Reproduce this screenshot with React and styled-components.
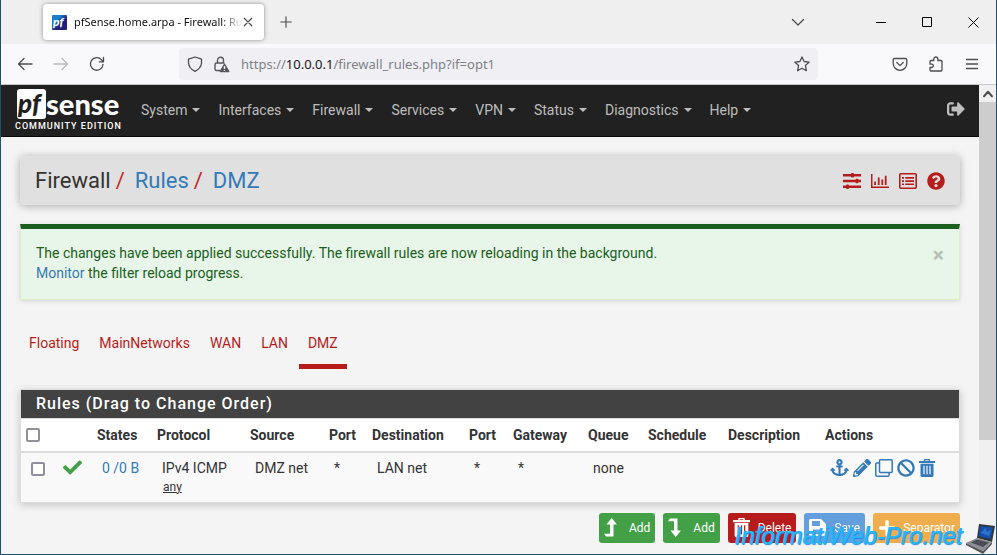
import { createGlobalStyle, styled } from "styled-components";
import {
  FaAnchor,
  FaBan,
  FaCheck,
  FaPencilAlt,
  FaPlus,
  FaQuestionCircle,
  FaSignOutAlt,
} from "react-icons/fa";

const menus = [
  "System",
  "Interfaces",
  "Firewall",
  "Services",
  "VPN",
  "Status",
  "Diagnostics",
  "Help",
];

const tabs = ["Floating", "MainNetworks", "WAN", "LAN", "DMZ"];

const columns = [
  { name: "States", width: 60 },
  { name: "Protocol", width: 93 },
  { name: "Source", width: 79 },
  { name: "Port", width: 43 },
  { name: "Destination", width: 97 },
  { name: "Port", width: 44 },
  { name: "Gateway", width: 75 },
  { name: "Queue", width: 60 },
  { name: "Schedule", width: 80 },
  { name: "Description", width: 97 },
  { name: "Actions", width: 139 },
];

const GlobalStyle = createGlobalStyle`
  * {
    box-sizing: border-box;
  }
  body {
    margin: 0;
    font-family: Roboto, "Liberation Sans", sans-serif;
    font-size: 14px;
    line-height: 20px;
    color: #333;
  }
  a {
    color: #337ab7;
    text-decoration: none;
  }
  button {
    font: inherit;
    border: 0;
    padding: 0;
    background: none;
    color: inherit;
  }
  svg {
    display: block;
    flex: none;
  }
`;

const Window = styled.div`
  position: relative;
  display: flex;
  flex-direction: column;
  height: 100vh;
  overflow: hidden;
  border: 1px solid #1b5070;
  border-top: 0;
  background: #f4f4f4;
`;

/* browser chrome */

const TitleBar = styled.div`
  display: flex;
  flex: none;
  align-items: center;
  height: 44px;
  padding-left: 42px;
  background: #efefef;
  color: #222;
`;

const BrowserTab = styled.div`
  display: flex;
  align-items: center;
  width: 221px;
  height: 36px;
  padding: 0 10px 0 9px;
  border-radius: 4px;
  background: #fff;
  box-shadow: 0 0 4px rgba(0, 0, 0, 0.4);
`;

const TabTitle = styled.span`
  flex: 1;
  margin-left: 7px;
  overflow: hidden;
  white-space: nowrap;
  font: 11px/20px "Noto Sans", sans-serif;
  color: #111;
  mask-image: linear-gradient(to right, #000 88%, transparent);
`;

const ChromeButton = styled.button`
  display: flex;
  align-items: center;
  justify-content: center;
  flex: none;
  width: ${(props) => props.$width || 36}px;
  height: 32px;
  color: ${(props) => props.$color || "#4c4c52"};
`;

const Spacer = styled.div`
  flex: 1;
`;

const ToolBar = styled.div`
  display: flex;
  flex: none;
  align-items: center;
  height: 41px;
  padding: 0 6px;
  border-bottom: 1px solid #c8c8cc;
  background: #f9f9fb;
`;

const AddressBar = styled.div`
  display: flex;
  flex: 1;
  align-items: center;
  height: 32px;
  margin: 0 64px;
  padding-left: 2px;
  border-radius: 4px;
  background: #f0f0f4;
`;

const Url = styled.span`
  flex: 1;
  margin-left: 6px;
  font: 13px/20px "Noto Sans", sans-serif;
  color: #808086;

  b {
    font-weight: 400;
    color: #15141a;
  }
`;

const Viewport = styled.div`
  display: flex;
  flex: 1;
  min-height: 0;
`;

const Page = styled.div`
  flex: 1;
  min-width: 0;
  overflow: hidden;
`;

const ScrollTrack = styled.div`
  display: flex;
  flex-direction: column;
  width: 17px;
  background: #f0f0f0;
`;

const ScrollThumb = styled.div`
  height: 72%;
  background: #cdcdcd;
`;

const ScrollArrow = styled.button`
  display: flex;
  align-items: center;
  justify-content: center;
  height: 17px;
  color: #505050;
`;

/* pfSense page */

const NavBar = styled.nav`
  display: flex;
  align-items: center;
  height: 52px;
  padding: 0 14px;
  border-bottom: 1px solid #080808;
  background: #212121;
`;

const Brand = styled.a`
  width: 106px;
  margin-right: 11px;
  color: #fff;
`;

const BrandName = styled.span`
  display: flex;
  height: 30px;
  margin-left: 2px;
  font: 900 29px/30px Lato, sans-serif;
`;

const BrandMark = styled.span`
  width: 29px;
  padding-left: 1px;
  border-radius: 3px;
  background: #fff;
  color: #212121;
  font-size: 26px;
  font-style: italic;
  line-height: 28px;
`;

const Edition = styled.span`
  display: block;
  white-space: nowrap;
  font-size: 9px;
  font-weight: 500;
  line-height: 14px;
  letter-spacing: 1px;
`;

const MenuList = styled.div`
  display: flex;
  flex: 1;
  padding-bottom: 2px;
`;

const MenuButton = styled.button`
  display: flex;
  align-items: center;
  padding: 0 9px;
  color: #bdbdbd;

  &::after {
    content: "";
    margin-left: 5px;
    border: 4px solid transparent;
    border-top-color: currentColor;
    border-bottom: 0;
  }
`;

const LogoutLink = styled.a`
  padding-bottom: 4px;
  color: #bdbdbd;
`;

const Container = styled.main`
  padding: 19px;
`;

const PageHeader = styled.header`
  display: flex;
  align-items: center;
  justify-content: space-between;
  height: 49px;
  padding: 0 15px;
  border-radius: 4px;
  background: #e0e0e0;
  box-shadow: 0 1px 8px rgba(0, 0, 0, 0.3);
`;

const Breadcrumb = styled.h1`
  display: flex;
  margin: 0;
  font-size: 22px;
  font-weight: 400;
  line-height: 28px;
  color: #333;
`;

const Slash = styled.span`
  margin: 0 10px 0 5px;
  color: #c62828;
`;

const HeaderLinks = styled.div`
  display: flex;
  gap: 10px;

  a {
    color: #b71c1c;
  }
`;

const Alert = styled.div`
  display: flex;
  justify-content: space-between;
  margin-top: 19px;
  padding: 14px 15px;
  min-height: 76px;
  border: 1px solid #dcedc8;
  border-top: 5px solid #1b5e20;
  background: #e8f5e9;
  box-shadow: 0 1px 5px rgba(0, 0, 0, 0.12);
  color: #1b5e20;
`;

const CloseButton = styled.button`
  align-self: flex-start;
  color: #b5c0b6;
  font-size: 21px;
  font-weight: 700;
  line-height: 24px;
`;

const TabList = styled.nav`
  display: flex;
  gap: 2px;
  margin-top: 23px;
`;

const TabLink = styled.a`
  padding: 10px 9px 11px;
  border-bottom: 5px solid ${(props) => (props.$active ? "#b71c1c" : "transparent")};
  color: #b71c1c;
`;

const Panel = styled.section`
  margin: 20px 0 10px;
  border: 1px solid #ddd;
  background: #fff;
  box-shadow: 0 2px 8px rgba(0, 0, 0, 0.2);
`;

const PanelTitle = styled.h2`
  margin: 0;
  padding: 0 15px;
  background: #424242;
  color: #fff;
  font-size: 16px;
  font-weight: 500;
  line-height: 28px;
  letter-spacing: 1px;
`;

const RulesTable = styled.table`
  width: 100%;
  border-collapse: collapse;
  border-top: 1px solid #ddd;

  th {
    height: 33px;
    padding: 0 5px;
    border-bottom: 2px solid #ddd;
    text-align: left;
    font-weight: 700;
  }
  td {
    height: 50px;
    padding: 5px 0 0 10px;
    background: #f9f9f9;
    vertical-align: top;
  }
  small {
    display: block;
    font-size: 12px;
    line-height: 18px;
    padding-left: 1px;
    text-decoration: underline;
  }
`;

const CheckBox = styled.input`
  appearance: none;
  display: block;
  width: 14px;
  height: 14px;
  margin: ${(props) => (props.$row ? "4px 0 0" : "0")};
  border: 2px solid #8f8f9d;
  border-radius: 2px;
  background: #fff;
`;

const RowActions = styled.div`
  display: flex;
  gap: 4px;

  a {
    display: flex;
    align-items: center;
    height: 20px;
  }
`;

const ButtonRow = styled.div`
  display: flex;
  justify-content: flex-end;
  gap: 8px;
`;

const ActionButton = styled.button`
  display: flex;
  align-items: center;
  height: 30px;
  padding: 0 5px;
  border-radius: 3px;
  background: ${(props) => props.$color};
  color: #fff;
  font-size: 12px;
  opacity: ${(props) => (props.$muted ? 0.85 : 1)};
`;

const ButtonIcon = styled.span`
  width: 25px;
`;

const Watermark = styled.div`
  position: absolute;
  right: 0;
  bottom: 0;
  display: flex;
  align-items: flex-end;
  gap: 4px;
  color: #29b6f6;
  font: italic 24px/36px "Liberation Sans", sans-serif;
  text-shadow: 1px 0 0 #29a9f5, 1px 1px 1px #1e88e5;
`;

const Line = ({ d, size = 16, width = 1.3, color = "currentColor" }) => (
  <svg width={size} height={size} viewBox="0 0 16 16" fill="none" stroke={color} strokeWidth={width} strokeLinecap="round" strokeLinejoin="round">
    <path d={d} />
  </svg>
);

const Favicon = () => (
  <svg width="15" height="15" viewBox="0 0 15 15">
    <defs>
      <linearGradient id="fav" x1="0" y1="0" x2="1" y2="1">
        <stop offset="0.3" stopColor="#1b7fd0" />
        <stop offset="0.6" stopColor="#20207c" />
      </linearGradient>
    </defs>
    <rect width="15" height="15" rx="1" fill="url(#fav)" />
    <text x="1" y="11" fill="#fff" fontFamily="Lato" fontWeight="900" fontStyle="italic" fontSize="12">pf</text>
  </svg>
);

const LockWarning = () => (
  <svg width="17" height="17" viewBox="0 0 17 17" fill="none" stroke="#55555b" strokeWidth="1.4">
    <path d="M4.500 7V4.300a3 3 0 0 1 6 0V7M7 14.500H3.500A1.500 1.500 0 0 1 2 13V8.500A1.500 1.500 0 0 1 3.500 7H11.500" />
    <path d="M11.500 8.300L15.800 15.500H7.200z" fill="#55555b" strokeLinejoin="round" />
    <path d="M11.500 10v3M11.500 14v1" stroke="#f0f0f4" />
  </svg>
);

const Sliders = () => (
  <svg width="18" height="18" viewBox="0 0 18 18" fill="currentColor">
    <path d="M0 2h18v2.500H0zM0 7.800h18v2.500H0zM0 13.500h18V16H0z" />
    <rect x="8" y="1" width="3" height="4.500" rx="1" />
    <rect x="12.500" y="6.800" width="3" height="4.500" rx="1" />
    <rect x="3" y="12.500" width="3" height="4.500" rx="1" />
  </svg>
);

const BarChart = () => (
  <svg width="18" height="18" viewBox="0 0 18 18" fill="currentColor">
    <path d="M0 2h1.500v12.500H18V16H0zM3.200 9.500h1.800V13H3.200zM6.800 5.500h1.800V13H6.800zM10.400 7.500h1.800V13h-1.800zM13.800 3.800h1.800V13h-1.800z" />
  </svg>
);

const ListAlt = () => (
  <svg width="18" height="18" viewBox="0 0 18 18" fill="currentColor">
    <rect x="0.800" y="1.800" width="16.400" height="14.400" rx="1" fill="none" stroke="currentColor" strokeWidth="1.600" />
    <path d="M3 5h2v1.700H3zM6.300 5H15v1.700H6.300zM3 8.200h2v1.700H3zM6.300 8.200H15v1.700H6.300zM3 11.400h2v1.700H3zM6.300 11.400H15v1.700H6.300z" />
  </svg>
);

const Clone = () => (
  <svg width="18" height="18" viewBox="0 0 18 18" fill="none" stroke="currentColor" strokeWidth="1.500">
    <rect x="4.500" y="0.800" width="12.700" height="12.700" rx="1" />
    <path d="M4.500 4H1.800a1 1 0 0 0-1 1V16.200a1 1 0 0 0 1 1H13a1 1 0 0 0 1-1V13.500" />
  </svg>
);

const Trash = ({ size = 18, slots = "#f9f9f9" }) => (
  <svg width={size - 2} height={size} viewBox="0 0 16 18" fill="currentColor">
    <path d="M0 2h4.800V1.200Q4.800 0 6 0h4q1.200 0 1.200 1.200V2H16v2H0zM6.300 1.300V2h3.400v-.700zM1.500 4.800h13V16.500q0 1.500-1.500 1.500H3q-1.500 0-1.500-1.500z" fillRule="evenodd" />
    <path d="M5 6.800v8.500M8 6.800v8.500M11 6.800v8.500" stroke={slots} strokeWidth="1.200" />
  </svg>
);

const Level = ({ down }) => (
  <svg width="13" height="20" viewBox="0 0 13 20" fill="currentColor">
    <path
      d="M7.700 0L13 6.500H9.500V18.500H2L0 15.700H6V6.500H2.500z"
      transform={down ? "translate(0 19) scale(1 -1)" : undefined}
    />
  </svg>
);

const Floppy = () => (
  <svg width="17" height="17" viewBox="0 0 17 17">
    <path fill="currentColor" fillRule="evenodd" d="M1.500 0H12l5 5v10.500q0 1.500-1.500 1.500h-14Q0 17 0 15.500v-14Q0 0 1.500 0zM3 2v5h8V2zM4 10.500V15h9v-4.500z" />
  </svg>
);

const Laptop = () => (
  <svg width="30" height="31" viewBox="0 0 30 31">
    <path d="M13 1L29 3 26 19 11 15z" fill="#33363c" />
    <path d="M14.500 3L27 4.500 24.500 16 12.500 13z" fill="#1450ad" />
    <path d="M15 10L19 5 21 9 25 7 23 13z" fill="#2f74cc" />
    <path d="M11 15L26 19 17 28 0 20z" fill="#8d8f94" />
    <path d="M11 16.500L23 19.500 17 24 5 19.500z" fill="#4b4d53" />
    <path d="M0 20L17 28 26 19V21L17 31 0 22z" fill="#55575d" />
  </svg>
);

const App = () => {
  return (
    <Window>
      <GlobalStyle />
      <TitleBar>
        <BrowserTab>
          <Favicon />
          <TabTitle>pfSense.home.arpa - Firewall: Rules</TabTitle>
          <ChromeButton $width={12} aria-label="Close tab">
            <Line size={12} d="M3 3L13 13M13 3L3 13" width={1.6} />
          </ChromeButton>
        </BrowserTab>
        <ChromeButton $width={43} aria-label="New tab">
          <Line size={14} d="M8 2V14M2 8H14" />
        </ChromeButton>
        <Spacer />
        <ChromeButton $width={120} aria-label="List tabs">
          <Line d="M2.500 5.500L8 11 13.500 5.500" />
        </ChromeButton>
        <ChromeButton $width={46} $color="#000" aria-label="Minimize">
          <svg width="10" height="1"><rect width="10" height="1" /></svg>
        </ChromeButton>
        <ChromeButton $width={46} $color="#000" aria-label="Maximize">
          <svg width="10" height="10"><path d="M.5 .5H9.500V9.500H.5z" fill="none" stroke="currentColor" /></svg>
        </ChromeButton>
        <ChromeButton $width={46} $color="#000" aria-label="Close">
          <svg width="11" height="11"><path d="M.5 .5L10.500 10.500M10.500 .5L.5 10.500" stroke="currentColor" /></svg>
        </ChromeButton>
      </TitleBar>
      <ToolBar>
        <ChromeButton aria-label="Back">
          <Line d="M15 8H1.500M7 2.500L1.500 8 7 13.500" />
        </ChromeButton>
        <ChromeButton $color="#b9b9be" aria-label="Forward">
          <Line d="M1 8H14.500M9 2.500L14.500 8 9 13.500" />
        </ChromeButton>
        <ChromeButton aria-label="Reload">
          <Line d="M14 8.500A6.300 6.300 0 1 1 12.500 3.800L14.200 5.500M14.500 1.500V5.800H10.200" />
        </ChromeButton>
        <AddressBar>
          <ChromeButton $width={27} aria-label="Tracking protection">
            <Line d="M8 1L14.500 3.200V7Q14 12.500 8 15.300 2 12.500 1.500 7V3.200z" />
          </ChromeButton>
          <ChromeButton $width={27} aria-label="Connection">
            <LockWarning />
          </ChromeButton>
          <Url>
            https://<b>10.0.0.1</b>/firewall_rules.php?if=opt1
          </Url>
          <ChromeButton $width={32} aria-label="Bookmark">
            <Line d="M8 1L10.100 5.500 15.200 6.100 11.400 9.500 12.400 14.700 8 12.200 3.600 14.700 4.600 9.500 .8 6.100 5.900 5.500z" />
          </ChromeButton>
        </AddressBar>
        <ChromeButton aria-label="Pocket">
          <Line d="M2.500 2.500H13.500Q14.800 2.500 14.800 3.800V7.500A6.800 6.800 0 0 1 1.200 7.500V3.800Q1.200 2.500 2.500 2.500zM4.800 6.500L8 9.600 11.200 6.500" />
        </ChromeButton>
        <ChromeButton aria-label="Extensions">
          <Line d="M2 5.500Q2 4.500 3 4.500H5.800V3A2 2 0 0 1 9.800 3V4.500H13Q14 4.500 14 5.500V14Q14 15 13 15H3Q2 15 2 14V11.500H4A1.700 1.700 0 0 0 4 8.200H2z" />
        </ChromeButton>
        <ChromeButton aria-label="Menu">
          <Line d="M2.500 3.500H13.500M2.500 8H13.500M2.500 12.500H13.500" />
        </ChromeButton>
      </ToolBar>

      <Viewport>
        <Page>
          <NavBar>
            <Brand href="#">
              <BrandName>
                <BrandMark>pf</BrandMark>sense
              </BrandName>
              <Edition>COMMUNITY EDITION</Edition>
            </Brand>
            <MenuList>
              {menus.map((menu) => (
                <MenuButton key={menu}>{menu}</MenuButton>
              ))}
            </MenuList>
            <LogoutLink href="#" aria-label="Logout">
              <FaSignOutAlt size={18} />
            </LogoutLink>
          </NavBar>

          <Container>
            <PageHeader>
              <Breadcrumb>
                Firewall<Slash>/</Slash>
                <a href="#">Rules</a>
                <Slash>/</Slash>
                <a href="#">DMZ</a>
              </Breadcrumb>
              <HeaderLinks>
                <a href="#" aria-label="Settings"><Sliders /></a>
                <a href="#" aria-label="Status"><BarChart /></a>
                <a href="#" aria-label="Logs"><ListAlt /></a>
                <a href="#" aria-label="Help"><FaQuestionCircle size={18} /></a>
              </HeaderLinks>
            </PageHeader>

            <Alert>
              <div>
                The changes have been applied successfully. The firewall rules are now reloading in the background.
                <br />
                <a href="#">Monitor</a> the filter reload progress.
              </div>
              <CloseButton aria-label="Close">×</CloseButton>
            </Alert>

            <TabList>
              {tabs.map((tab) => (
                <TabLink key={tab} href="#" $active={tab === "DMZ"}>
                  {tab}
                </TabLink>
              ))}
            </TabList>

            <Panel>
              <PanelTitle>Rules (Drag to Change Order)</PanelTitle>
              <RulesTable>
                <colgroup>
                  <col width="32" />
                  <col width="39" />
                  {columns.map((column, i) => (
                    <col key={i} width={column.width} />
                  ))}
                </colgroup>
                <thead>
                  <tr>
                    <th><CheckBox type="checkbox" aria-label="Select all rules" /></th>
                    <th />
                    {columns.map((column, i) => (
                      <th key={i}>{column.name}</th>
                    ))}
                  </tr>
                </thead>
                <tbody>
                  <tr>
                    <td><CheckBox type="checkbox" $row aria-label="Select rule" /></td>
                    <td><FaCheck size={19} color="#43a047" /></td>
                    <td><a href="#">0 /0 B</a></td>
                    <td>IPv4 ICMP<small>any</small></td>
                    <td>DMZ net</td>
                    <td>*</td>
                    <td>LAN net</td>
                    <td>*</td>
                    <td>*</td>
                    <td>none</td>
                    <td />
                    <td />
                    <td>
                      <RowActions>
                        <a href="#" aria-label="Anchor"><FaAnchor size={19} /></a>
                        <a href="#" aria-label="Edit"><FaPencilAlt size={18} /></a>
                        <a href="#" aria-label="Copy"><Clone /></a>
                        <a href="#" aria-label="Disable"><FaBan size={18} /></a>
                        <a href="#" aria-label="Delete"><Trash /></a>
                      </RowActions>
                    </td>
                  </tr>
                </tbody>
              </RulesTable>
            </Panel>

            <ButtonRow>
              <ActionButton $color="#43a047">
                <ButtonIcon><Level /></ButtonIcon>Add
              </ActionButton>
              <ActionButton $color="#43a047">
                <ButtonIcon><Level down /></ButtonIcon>Add
              </ActionButton>
              <ActionButton $color="#b71c1c">
                <ButtonIcon><Trash size={19} slots="#b71c1c" /></ButtonIcon>Delete
              </ActionButton>
              <ActionButton $color="#4a90d9" $muted>
                <ButtonIcon><Floppy /></ButtonIcon>Save
              </ActionButton>
              <ActionButton $color="#f0ad4e">
                <ButtonIcon><FaPlus size={18} /></ButtonIcon>Separator
              </ActionButton>
            </ButtonRow>
          </Container>
        </Page>
        <ScrollTrack>
          <ScrollArrow aria-label="Scroll up">
            <Line size={14} d="M3.500 10.500L8 5.500 12.500 10.500" width={2.4} />
          </ScrollArrow>
          <ScrollThumb />
        </ScrollTrack>
      </Viewport>

      <Watermark>
        InformatiWeb-Pro.net
        <Laptop />
      </Watermark>
    </Window>
  );
};

export default App;
